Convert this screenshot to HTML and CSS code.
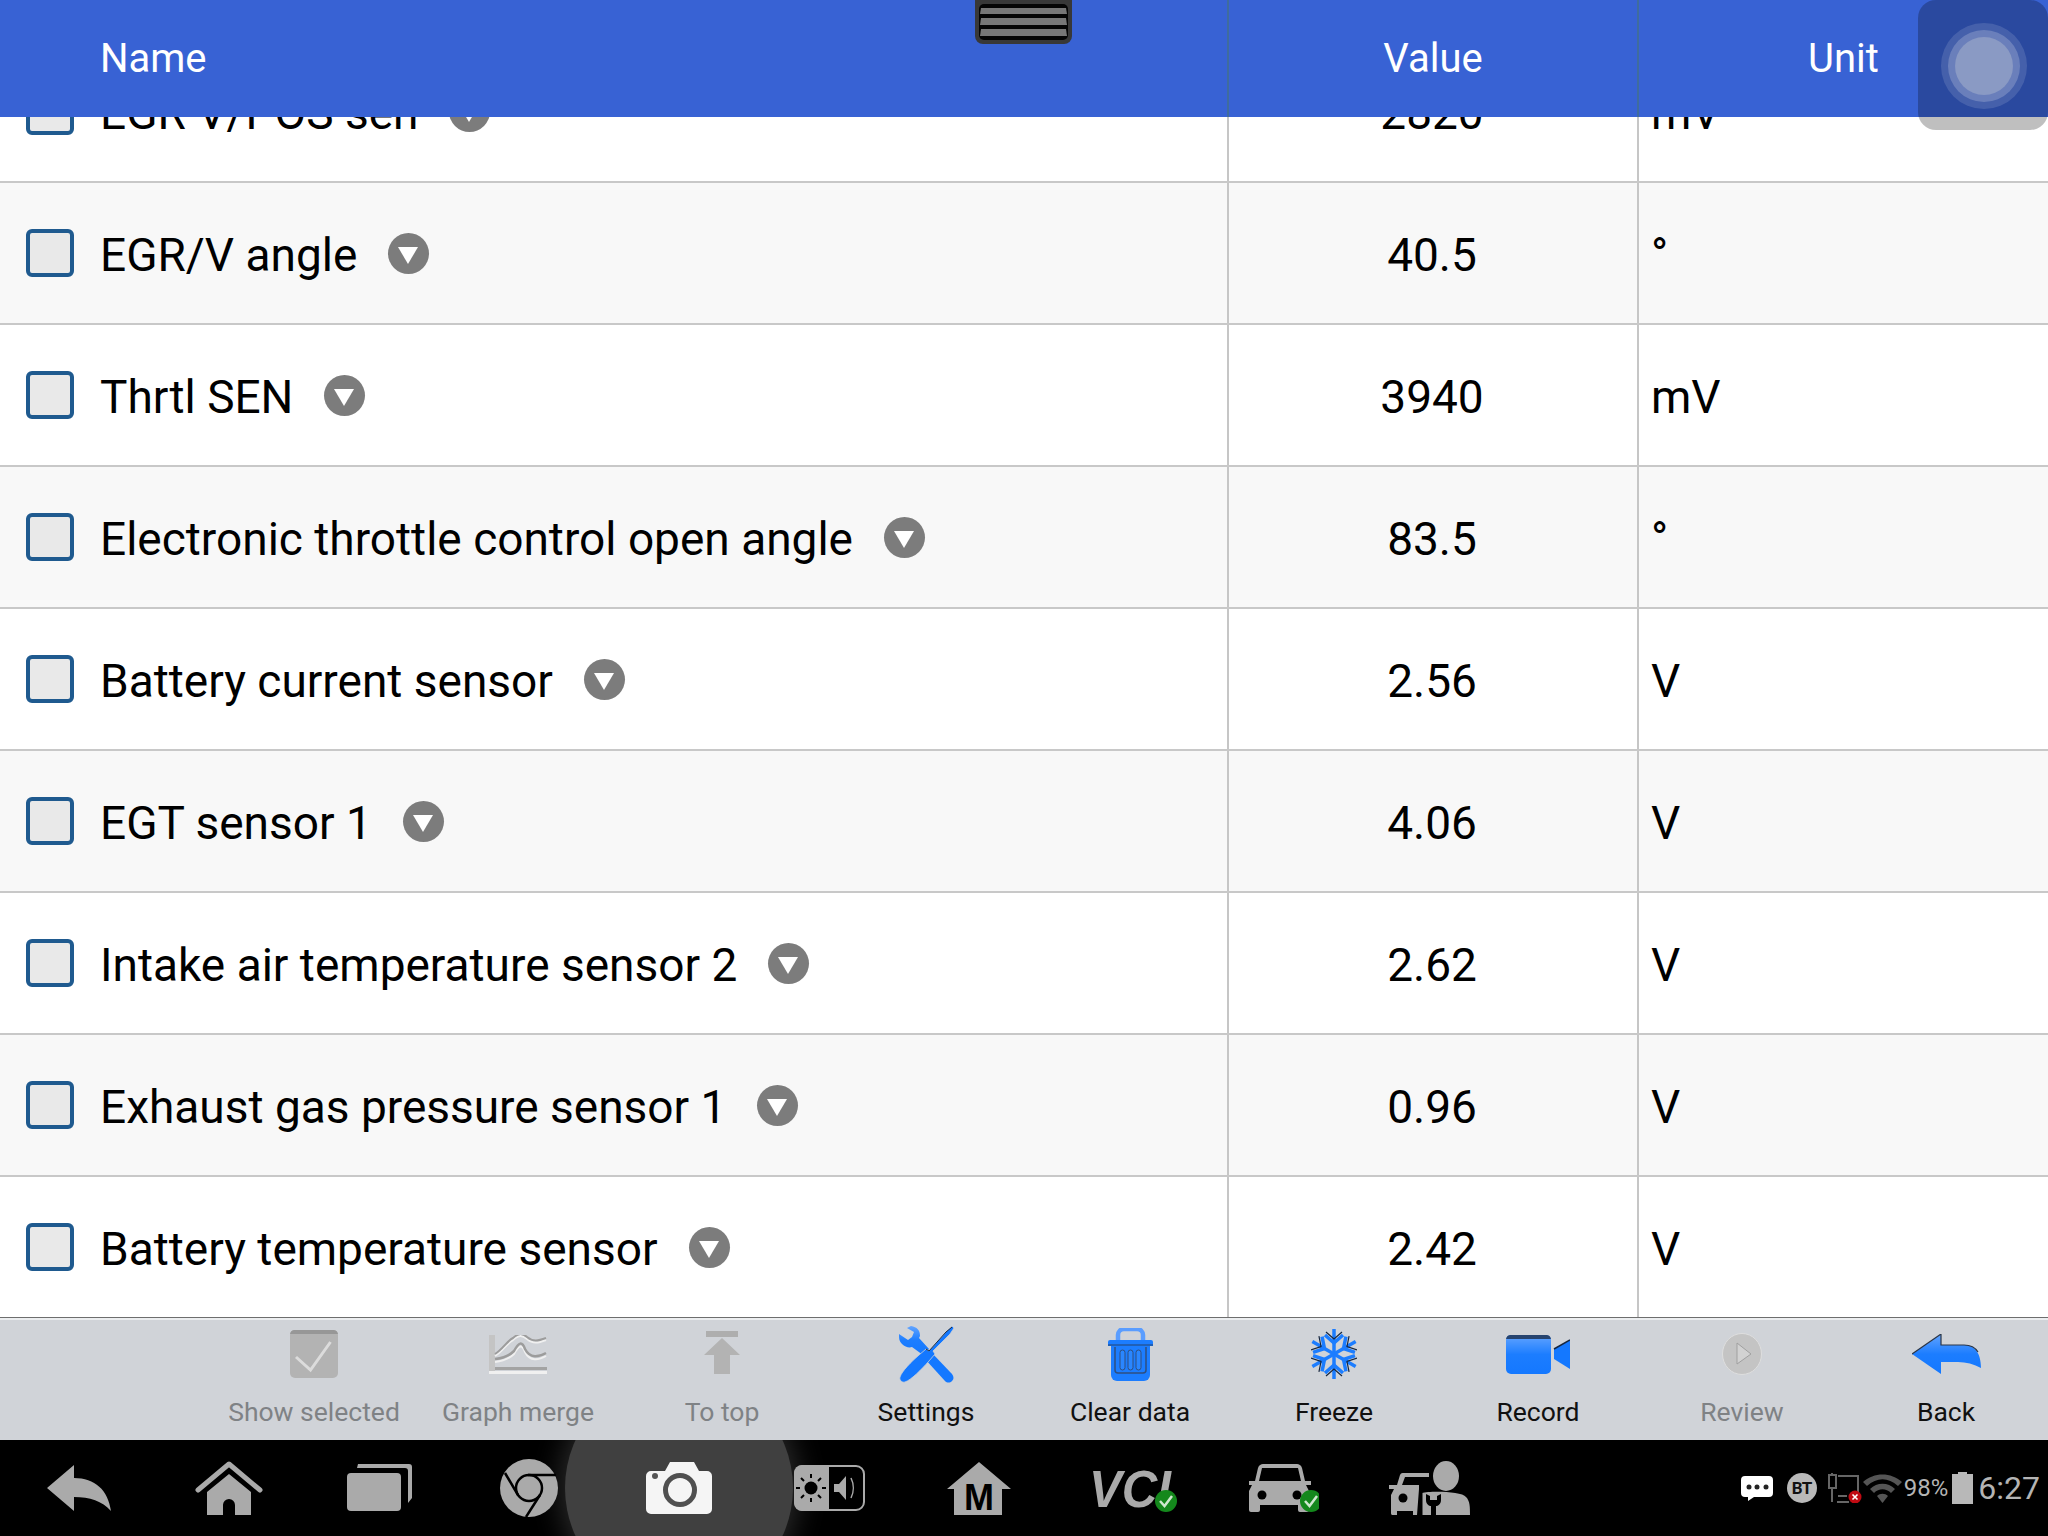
FILE: index.html
```html
<!DOCTYPE html>
<html lang="en">
<head>
    <meta charset="UTF-8">
    <meta name="viewport" content="width=device-width, initial-scale=1.0">
    <title>Live Data</title>
    <link rel="stylesheet" href="styles.css">
</head>
<body>
<div class="app">
    <svg class="pull-handle" width="97" height="44" viewBox="0 0 97 44">
        <path d="M0 0H97V36a8 8 0 0 1-8 8H8a8 8 0 0 1-8-8Z" fill="#383838"/>
        <rect x="4" y="4" width="89" height="36" rx="5" fill="#050505"/>
        <path d="M6 8H91L92 14H5Z" fill="#777"/>
        <path d="M6 18H91L92 25H5Z" fill="#777"/>
        <path d="M6 29H91L92 36H5Z" fill="#777"/>
    </svg>

    <div class="float-btn">
        <div class="float-ring-outer"><div class="float-ring-mid"><div class="float-ring-inner"></div></div></div>
    </div>

    <div class="table-head">
        <div class="col-name">Name</div>
        <div class="col-value">Value</div>
        <div class="col-unit">Unit</div>
    </div>

    <div class="table-body">
        <div class="row">
            <div class="col-name"><span class="check"></span><span class="label">EGR V/POS sen</span><span class="drop"></span></div>
            <div class="col-value">2820</div>
            <div class="col-unit">mV</div>
        </div>
        <div class="row">
            <div class="col-name"><span class="check"></span><span class="label">EGR/V angle</span><span class="drop"></span></div>
            <div class="col-value">40.5</div>
            <div class="col-unit">°</div>
        </div>
        <div class="row">
            <div class="col-name"><span class="check"></span><span class="label">Thrtl SEN</span><span class="drop"></span></div>
            <div class="col-value">3940</div>
            <div class="col-unit">mV</div>
        </div>
        <div class="row">
            <div class="col-name"><span class="check"></span><span class="label">Electronic throttle control open angle</span><span class="drop"></span></div>
            <div class="col-value">83.5</div>
            <div class="col-unit">°</div>
        </div>
        <div class="row">
            <div class="col-name"><span class="check"></span><span class="label">Battery current sensor</span><span class="drop"></span></div>
            <div class="col-value">2.56</div>
            <div class="col-unit">V</div>
        </div>
        <div class="row">
            <div class="col-name"><span class="check"></span><span class="label">EGT sensor 1</span><span class="drop"></span></div>
            <div class="col-value">4.06</div>
            <div class="col-unit">V</div>
        </div>
        <div class="row">
            <div class="col-name"><span class="check"></span><span class="label">Intake air temperature sensor 2</span><span class="drop"></span></div>
            <div class="col-value">2.62</div>
            <div class="col-unit">V</div>
        </div>
        <div class="row">
            <div class="col-name"><span class="check"></span><span class="label">Exhaust gas pressure sensor 1</span><span class="drop"></span></div>
            <div class="col-value">0.96</div>
            <div class="col-unit">V</div>
        </div>
        <div class="row">
            <div class="col-name"><span class="check"></span><span class="label">Battery temperature sensor</span><span class="drop"></span></div>
            <div class="col-value">2.42</div>
            <div class="col-unit">V</div>
        </div>
    </div>

    <!-- toolbar -->
    <div class="toolbar">
        <svg width="0" height="0" class="defs">
            <defs>
                <linearGradient id="blue" x1="0" y1="0" x2="0" y2="1">
                    <stop offset="0" stop-color="#62a4ff"/>
                    <stop offset="0.5" stop-color="#1c7dff"/>
                    <stop offset="1" stop-color="#1478ff"/>
                </linearGradient>
            </defs>
        </svg>
        <div class="tool off">
            <div class="tool-icon">
                <svg width="48" height="48" viewBox="0 0 48 48">
                    <rect width="48" height="48" rx="5" fill="#b3b3b3"/>
                    <path d="M5 0H43a5 5 0 0 1 5 4H0a5 5 0 0 1 5-4Z" fill="#979797"/>
                    <path d="M6 27L20.500 40L40.500 12" fill="none" stroke="#dcdcdc" stroke-width="3"/>
                </svg>
            </div>
            <div class="tool-label">Show selected</div>
        </div>
        <div class="tool off">
            <div class="tool-icon">
                <svg width="58" height="39" viewBox="0 0 58 39">
                    <rect x="0" y="0" width="6" height="39" fill="#c4c4c4"/>
                    <rect x="6" y="32" width="52" height="3" fill="#a3a3a3"/>
                    <rect x="0" y="36" width="58" height="3" fill="#f0f0f0"/>
                    <path d="M6 21C14 16 18 8 24 5C30 0 33 0 38 4C44 9 49 8 57 5" fill="none" stroke="#f0f0f0" stroke-width="2"/>
                    <path d="M6 19C14 14 18 6 24 3C30-2 33-2 38 2C44 7 49 6 57 3" fill="none" stroke="#9c9c9c" stroke-width="2"/>
                    <path d="M6 27C14 26 20 24 25 19C30 10 33 9 36 17C41 27 50 25 57 21" fill="none" stroke="#f0f0f0" stroke-width="2"/>
                    <path d="M6 24C14 23 20 21 25 16C30 7 33 6 36 14C41 24 50 22 57 18" fill="none" stroke="#9c9c9c" stroke-width="2.500"/>
                </svg>
            </div>
            <div class="tool-label">Graph merge</div>
        </div>
        <div class="tool off">
            <div class="tool-icon">
                <svg class="raise" width="36" height="43" viewBox="0 0 36 43">
                    <rect x="2" y="0" width="32" height="6" fill="#aeaeae"/>
                    <path d="M18 7L36 24H26V43H10V24H0Z" fill="#b3b3b3"/>
                </svg>
            </div>
            <div class="tool-label">To top</div>
        </div>
        <div class="tool">
            <div class="tool-icon">
                <svg width="55" height="57" viewBox="0 0 55 57">
                    <path d="M12 0C18 1 21 4 21 10L20 12L30 23L24 29L13 21C10 22 6 21 3 18C0 15 0 12 0 8L9 14L13 11L15 6L8 2Z" fill="url(#blue)"/>
                    <path d="M32 26L53 48C55 51 55 53 53 55C51 57 48 57 46 55L26 33Z" fill="#1478ff"/>
                    <path d="M53 0L55 2L51 8L34 25L36 28L30 35C22 44 12 54 6 56C3 57 0 54 1 51C3 45 12 36 20 29L27 23L30 25L47 6Z" fill="#1478ff" stroke="#cfd2d7" stroke-width="0.800"/>
                    <path d="M53 1L47 6L30 25L27 23" fill="none" stroke="#1c2b40" stroke-width="1"/>
                </svg>
            </div>
            <div class="tool-label">Settings</div>
        </div>
        <div class="tool">
            <div class="tool-icon">
                <svg width="45" height="53" viewBox="0 0 45 53">
                    <path d="M10 13V7a6 6 0 0 1 6-6H29a6 6 0 0 1 6 6V13" fill="none" stroke="#5a9dff" stroke-width="4.500"/>
                    <path d="M2 12H43a2 2 0 0 1 2 2V18H0V14a2 2 0 0 1 2-2Z" fill="#1c7dff"/>
                    <path d="M0 17H45" stroke="#27446f" stroke-width="1"/>
                    <path d="M3 18H42V47a6 6 0 0 1-6 6H9a6 6 0 0 1-6-6Z" fill="#1c7dff"/>
                    <path d="M7 19V42a3 3 0 0 0 3 3H35a3 3 0 0 0 3-3V19" fill="none" stroke="#2f4f80" stroke-width="1.500"/>
                    <rect x="12" y="22" width="5" height="20" rx="2.500" fill="#2a86ff" stroke="#2f4f80"/>
                    <rect x="20" y="22" width="5" height="20" rx="2.500" fill="#2a86ff" stroke="#2f4f80"/>
                    <rect x="28" y="22" width="5" height="20" rx="2.500" fill="#2a86ff" stroke="#2f4f80"/>
                </svg>
            </div>
            <div class="tool-label">Clear data</div>
        </div>
        <div class="tool">
            <div class="tool-icon">
                <svg width="46" height="50" viewBox="0 0 46 50">
                    <defs>
                        <g id="arm">
                            <path d="M23 25V0" stroke="#1c7dff" stroke-width="3.500" fill="none"/>
                            <path d="M14 6L23 14L32 6" stroke="#1c7dff" stroke-width="3.500" fill="none"/>
                            <path d="M15 3L23 10L31 3" stroke="#16263f" stroke-width="1.200" fill="none"/>
                        </g>
                    </defs>
                    <use href="#arm"/>
                    <use href="#arm" transform="rotate(60 23 25)"/>
                    <use href="#arm" transform="rotate(120 23 25)"/>
                    <use href="#arm" transform="rotate(180 23 25)"/>
                    <use href="#arm" transform="rotate(240 23 25)"/>
                    <use href="#arm" transform="rotate(300 23 25)"/>
                </svg>
            </div>
            <div class="tool-label">Freeze</div>
        </div>
        <div class="tool">
            <div class="tool-icon">
                <svg width="64" height="39" viewBox="0 0 64 39">
                    <rect x="0" y="0" width="45" height="39" rx="5" fill="url(#blue)"/>
                    <path d="M5 0H40a5 5 0 0 1 5 4H0a5 5 0 0 1 5-4Z" fill="#27446f"/>
                    <path d="M48 14L64 5V34L48 24Z" fill="#1478ff"/>
                    <path d="M48 14L64 5" stroke="#16263f" stroke-width="1.500"/>
                </svg>
            </div>
            <div class="tool-label">Record</div>
        </div>
        <div class="tool off">
            <div class="tool-icon">
                <svg width="40" height="42" viewBox="0 0 40 42">
                    <ellipse cx="20" cy="21" rx="19.500" ry="20.500" fill="#c4c4c4" stroke="#dedede"/>
                    <path d="M15 10L29 21L15 31Z" fill="#d2d2d2" stroke="#a0a0a0"/>
                </svg>
            </div>
            <div class="tool-label">Review</div>
        </div>
        <div class="tool">
            <div class="tool-icon">
                <svg width="69" height="41" viewBox="0 0 69 41">
                    <path d="M0 20L29 0V11H52C62 11 69 18 69 34C62 30 54 28 46 28H29V40Z" fill="url(#blue)"/>
                    <path d="M0 20L29 0V11H52C58 11 63 13 66 18" fill="none" stroke="#2b3648" stroke-width="1.200"/>
                </svg>
            </div>
            <div class="tool-label">Back</div>
        </div>
    </div>

    <!-- system bar -->
    <div class="navbar">
        <div class="cam-glow"></div>
        <div class="nav-icons">
            <div class="nav-slot">
                <svg width="64" height="46" viewBox="0 0 64 46">
                    <path d="M0 23L27 0V13C48 13 61 25 64 46C55 36 43 32 27 32V46Z" fill="#aaa"/>
                </svg>
            </div>
            <div class="nav-slot">
                <svg width="68" height="55" viewBox="0 0 68 55">
                    <path d="M3 29L34 3L65 29" fill="none" stroke="#aaa" stroke-width="5" stroke-linecap="round" stroke-linejoin="round"/>
                    <path d="M34 13L56 31V54H40V44a6 6 0 0 0-12 0V54H12V31Z" fill="#aaa"/>
                </svg>
            </div>
            <div class="nav-slot">
                <svg width="65" height="48" viewBox="0 0 65 48">
                    <path d="M11 0H62a3 3 0 0 1 3 3V34l-4 5V7a3 3 0 0 0-3-3H10Z" fill="#aaa"/>
                    <rect x="0" y="9" width="54" height="38" rx="4" fill="#aaa"/>
                </svg>
            </div>
            <div class="nav-slot">
                <svg width="58" height="58" viewBox="0 0 58 58">
                    <circle cx="29" cy="29" r="29" fill="#aaa"/>
                    <circle cx="29" cy="29" r="13" fill="none" stroke="#000" stroke-width="2.500"/>
                    <path d="M28 16H56M40 36L26 58M18 36L5 14" stroke="#000" stroke-width="2.500" fill="none"/>
                </svg>
            </div>
            <div class="nav-slot">
                <svg width="66" height="52" viewBox="0 0 66 52">
                    <path d="M5 9H19L24 0H48L53 9H61a5 5 0 0 1 5 5V47a5 5 0 0 1-5 5H5a5 5 0 0 1-5-5V14a5 5 0 0 1 5-5Z" fill="#f5f5f5"/>
                    <circle cx="9" cy="14" r="3" fill="#555"/>
                    <circle cx="34" cy="28" r="14.500" fill="none" stroke="#505050" stroke-width="5"/>
                </svg>
            </div>
            <div class="nav-slot">
                <svg width="71" height="46" viewBox="0 0 71 46">
                    <rect x="1" y="1" width="69" height="44" rx="8" fill="#000" stroke="#aaa" stroke-width="2"/>
                    <path d="M8 0H35V46H8a8 8 0 0 1-8-8V8a8 8 0 0 1 8-8Z" fill="#aaa"/>
                    <circle cx="17" cy="23" r="6.500" fill="#000"/>
                    <path d="M17 9V13M17 33V37M2 23H6M28 23H32M7 13L10 16M27 13L24 16M7 33L10 30M27 33L24 30" stroke="#000" stroke-width="2"/>
                    <path d="M40 19H45L52 11V35L45 27H40Z" fill="#aaa"/>
                    <path d="M57 13C60 19 60 27 57 33" fill="none" stroke="#aaa" stroke-width="1.500"/>
                </svg>
            </div>
            <div class="nav-slot">
                <svg width="64" height="53" viewBox="0 0 64 53">
                    <path d="M32 0L64 27H55V53H7V27H0Z" fill="#aaa"/>
                    <text x="32" y="48" text-anchor="middle" class="m-mark">M</text>
                </svg>
            </div>
            <div class="nav-slot">
                <svg width="96" height="52" viewBox="0 0 96 52">
                    <text x="8" y="45" textLength="82" lengthAdjust="spacingAndGlyphs" class="vci-mark">VCI</text>
                    <circle cx="85" cy="39" r="11" fill="#14881c"/>
                    <path d="M79 39L83.500 44L91 34" fill="none" stroke="#cfe8cf" stroke-width="2.500"/>
                </svg>
            </div>
            <div class="nav-slot">
                <svg width="80" height="50" viewBox="0 0 80 50">
                    <path d="M16 18L19 5C20 2 22 1 24 1H58C60 1 62 2 63 5L66 18H72V22H67L70 28V47a2 2 0 0 1-2 2H61a2 2 0 0 1-2-2V42H21V47a2 2 0 0 1-2 2H12a2 2 0 0 1-2-2V28L13 22H10V18Z" fill="#aaa"/>
                    <path d="M20 18L23 5H59L62 18Z" fill="#000"/>
                    <circle cx="23" cy="32" r="4.500" fill="#000"/>
                    <circle cx="58" cy="32" r="4.500" fill="#000"/>
                    <circle cx="72" cy="38" r="11" fill="#14881c"/>
                    <path d="M66 38L70.500 43L78 33" fill="none" stroke="#cfe8cf" stroke-width="2.500"/>
                </svg>
            </div>
            <div class="nav-slot">
                <svg width="81" height="54" viewBox="0 0 81 54">
                    <ellipse cx="57" cy="15" rx="13" ry="15" fill="#aaa"/>
                    <path d="M33 32C40 30 73 30 77 36C81 40 81 46 81 54H31Z" fill="#aaa"/>
                    <path d="M8 24L11 14C12 12 13 12 15 12H40V16H16L13 24H30V28L28 54H24V50H8V54H3a2 2 0 0 1-1-2V34L5 28H0V24Z" fill="#aaa"/>
                    <circle cx="14" cy="37" r="4.500" fill="#000"/>
                    <path d="M32 30V54" stroke="#000" stroke-width="3"/>
                    <path d="M37 33V39C37 43 40 45 42 45V54H47V45C49 45 52 43 52 39V33L48 35V39H41V35Z" fill="#000"/>
                </svg>
            </div>
        </div>
        <div class="status">
            <svg class="st-chat" width="32" height="25" viewBox="0 0 32 25">
                <path d="M4 0H28a4 4 0 0 1 4 4V17a4 4 0 0 1-4 4H13L7 25V21H4a4 4 0 0 1-4-4V4a4 4 0 0 1 4-4Z" fill="#fff"/>
                <circle cx="8" cy="11" r="2.500" fill="#222"/>
                <circle cx="16" cy="11" r="2.500" fill="#222"/>
                <circle cx="25" cy="11" r="2.500" fill="#222"/>
            </svg>
            <div class="st-bt">BT</div>
            <svg class="st-eth" width="35" height="30" viewBox="0 0 35 30">
                <path d="M5 0V2M5 15V29M11 3H31V23M11 23H20M10 29H22" fill="none" stroke="#666" stroke-width="2"/>
                <rect x="2" y="2" width="7" height="13" fill="none" stroke="#666" stroke-width="2"/>
                <circle cx="28" cy="24" r="6.500" fill="#c00a12"/>
                <path d="M25.500 21.500L30.500 26.500M30.500 21.500L25.500 26.500" stroke="#fff" stroke-width="1.600"/>
            </svg>
            <svg class="st-wifi" width="39" height="29" viewBox="0 0 39 29">
                <path d="M0 8C11-2 28-2 39 8L35 12C25 3 14 3 4 12Z" fill="#555"/>
                <path d="M7 15C14 8 25 8 32 15L28 19C23 14 16 14 11 19Z" fill="#555"/>
                <path d="M14 22C17 19 22 19 25 22L19.500 29Z" fill="#555"/>
            </svg>
            <span class="st-pct">98%</span>
            <svg class="st-batt" width="21" height="32" viewBox="0 0 21 32">
                <path d="M6 0H15V2H21V32H0V2H6Z" fill="#b8b8b8"/>
            </svg>
            <span class="st-time">6:27</span>
        </div>
    </div>
</div>
</body>
</html>
```

FILE: styles.css
```css
* {
    box-sizing: border-box;
}

body {
    margin: 0;
    background: #fff;
    color: #000;
    font-family: Roboto, 'Noto Sans', sans-serif;
}

.app {
    position: relative;
    width: 2048px;
    height: 1536px;
    overflow: hidden;
    display: flex;
    flex-direction: column;
}

/* things floating over the app */
.pull-handle {
    position: absolute;
    left: 975px;
    top: 0;
    z-index: 5;
}

.float-btn {
    position: absolute;
    right: 0;
    top: 0;
    z-index: 5;
    width: 130px;
    height: 130px;
    padding: 2px 0 0 2px;
    border-radius: 18px;
    background: rgba(0, 0, 0, 0.25);
    display: flex;
    align-items: center;
    justify-content: center;
}

.float-ring-outer,
.float-ring-mid,
.float-ring-inner {
    border-radius: 50%;
    display: flex;
    align-items: center;
    justify-content: center;
}

.float-ring-outer {
    width: 86px;
    height: 86px;
    background: rgba(255, 255, 255, 0.13);
}

.float-ring-mid {
    width: 72px;
    height: 72px;
    background: rgba(255, 255, 255, 0.2);
}

.float-ring-inner {
    width: 58px;
    height: 58px;
    background: #8a9ac4;
}

/* table */
.table-head {
    display: flex;
    flex: none;
    height: 117px;
    background: #3862d4;
    color: #fff;
    font-size: 40px;
    align-items: stretch;
    line-height: 118px;
}

.table-head .col-name {
    padding-left: 100px;
}

.table-head .col-value,
.table-head .col-unit {
    border-left-color: #3f6c9e;
    padding: 0;
    text-align: center;
}

.col-name {
    width: 1227px;
    flex: none;
}

.col-value {
    width: 410px;
    flex: none;
    border-left: 2px solid #c6c6c6;
    padding-right: 2px;
    text-align: center;
}

.col-unit {
    flex: 1;
    border-left: 2px solid #c6c6c6;
    padding-left: 12px;
}

.table-body {
    height: 1200px;
    flex: none;
    overflow: hidden;
}

.row {
    display: flex;
    height: 142px;
    border-bottom: 2px solid #c8c8c8;
    font-size: 46px;
    line-height: 144px;
    background: #fff;
}

.row:first-child {
    margin-top: -76px;
}

.row:nth-child(even) {
    background: #f8f8f8;
}

.row .col-name {
    display: flex;
    align-items: center;
    padding-left: 26px;
}

.check {
    width: 48px;
    height: 48px;
    border: 4px solid #1f5a8f;
    border-radius: 6px;
    background: #e9e9e9;
}

.label {
    margin: 4px 0 0 26px;
}

.drop {
    position: relative;
    width: 41px;
    height: 41px;
    border-radius: 50%;
    background: #7c7c7c;
    margin-left: 31px;
}

.drop::after {
    content: "";
    position: absolute;
    left: 10px;
    top: 14px;
    border-left: 10.500px solid transparent;
    border-right: 10.500px solid transparent;
    border-top: 17px solid #fff;
}

/* toolbar */
.toolbar {
    flex: none;
    height: 123px;
    border-top: 1px solid #6e6e6e;
    background: #d0d3d8;
    box-shadow: inset 0 2px 0 #eceef0;
    display: grid;
    grid-template-columns: repeat(9, 204px);
    padding: 6px 0 0 212px;
}

.defs {
    position: absolute;
}

.tool {
    display: flex;
    flex-direction: column;
    align-items: center;
}

.tool-icon {
    height: 60px;
    display: flex;
    align-items: center;
    justify-content: center;
}

.raise {
    margin-top: -4px;
}

.tool-label {
    margin-top: 12px;
    font-size: 26.500px;
    line-height: 32px;
    color: #111;
}

.tool.off .tool-label {
    color: #7f8285;
}

/* system bar */
.navbar {
    position: relative;
    flex: none;
    height: 96px;
    background: #000;
    overflow: hidden;
    display: flex;
    align-items: center;
    justify-content: space-between;
}

.cam-glow {
    position: absolute;
    left: 565px;
    top: -66px;
    width: 228px;
    height: 228px;
    border-radius: 50%;
    background: #404040;
    box-shadow: 0 0 30px 4px #2e2e2e;
}

.nav-icons {
    position: relative;
    display: grid;
    grid-template-columns: repeat(10, 150px);
    padding-left: 4px;
}

.nav-slot {
    display: flex;
    align-items: center;
    justify-content: center;
    height: 96px;
}

.m-mark {
    font-family: 'Liberation Sans', sans-serif;
    font-weight: bold;
    font-size: 36px;
    fill: #000;
}

.vci-mark {
    font-family: 'Liberation Sans', sans-serif;
    font-weight: bold;
    font-style: italic;
    font-size: 52px;
    fill: #aaa;
}

.status {
    position: relative;
    display: flex;
    align-items: center;
    padding-right: 8px;
    color: #b4b4b4;
}

.st-bt {
    width: 30px;
    height: 30px;
    margin-left: 14px;
    border-radius: 50%;
    background: #b9b9b9;
    color: #111;
    font-size: 17px;
    font-weight: bold;
    line-height: 30px;
    text-align: center;
    letter-spacing: -0.5px;
}

.st-eth {
    margin-left: 10px;
}

.st-wifi {
    margin-left: 1px;
}

.st-pct {
    font-size: 24px;
    margin-left: 2px;
}

.st-batt {
    margin-left: 4px;
}

.st-time {
    font-size: 32px;
    margin-left: 5px;
}
```
